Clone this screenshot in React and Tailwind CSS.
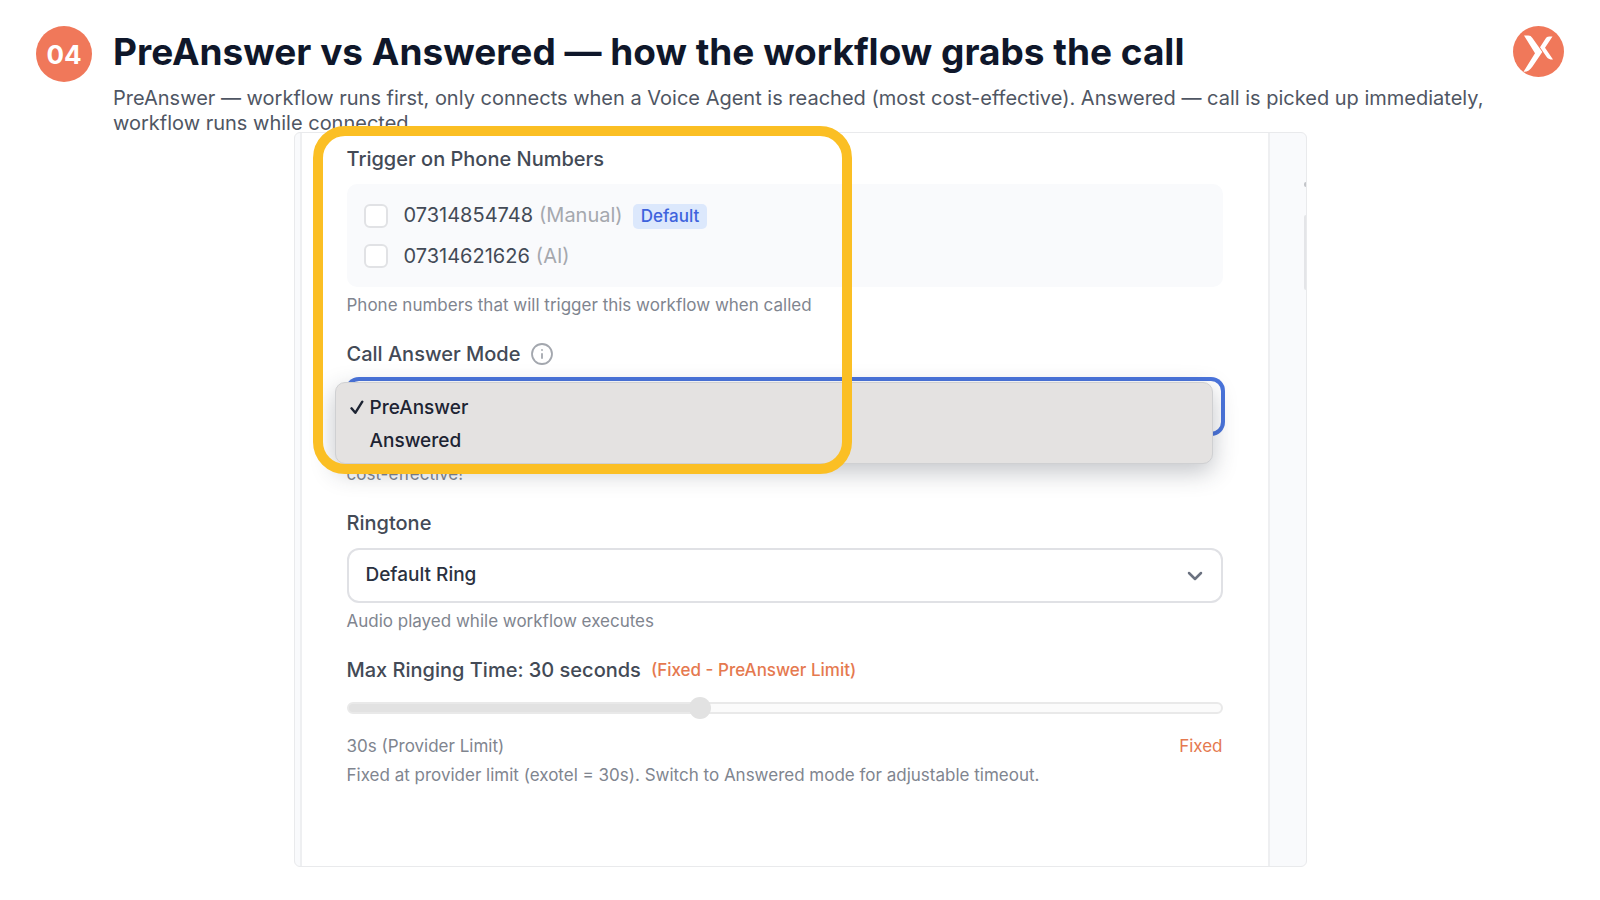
import { useState } from 'react';
import { ChevronDown, Info } from 'lucide-react';

const phoneNumbers = [
  { id: 'manual', number: '07314854748', kind: '(Manual)', isDefault: true },
  { id: 'ai', number: '07314621626', kind: '(AI)', isDefault: false },
];

const answerModes = ['PreAnswer', 'Answered'];

const labelClass = 'text-[20px] leading-[26px] font-medium text-[#434a56]';
const hintClass = 'mt-[7px] text-[17px] leading-[22px] text-[#80858f]';

function Logo() {
  return (
    <svg viewBox="0 0 51 51" className="size-[51px] shrink-0" role="img" aria-label="Logo">
      <circle cx="25.5" cy="25.5" r="25.5" fill="#f0785a" />
      <path
        d="M11 9.500h4.200c2 0 3 .8 4.200 2.600L29.300 26 19.500 40.500C17 44.300 14.500 45.800 10.500 45.800L22 27.200Z"
        fill="#fff"
      />
      <path
        d="M39.500 10.500h-3.300c-1.800 0-2.700.800-3.700 2.300L27 21.200l6.500 9.600c1.300 1.900 2.700 2.800 6.500 2.800L32 21.700Z"
        fill="#fff"
      />
    </svg>
  );
}

function CheckMark() {
  return (
    <svg viewBox="0 0 14 15" className="h-[15px] w-[14px]" fill="none" aria-hidden="true">
      <path
        d="M1.500 8.300 5.300 12.800 12.300 1.700"
        stroke="currentColor"
        strokeWidth="2.4"
        strokeLinecap="round"
        strokeLinejoin="round"
      />
    </svg>
  );
}

function Header() {
  return (
    <header className="flex items-start px-9 pt-[26px]">
      <div className="flex size-14 shrink-0 items-center justify-center rounded-full bg-[#f0785a] text-[26px] font-bold text-white">
        04
      </div>
      <div className="ml-[21px] mr-6 flex-1 pt-1">
        <h1 className="text-[37px] leading-[44px] font-bold text-[#0f172a]">
          PreAnswer vs Answered — how the workflow grabs the call
        </h1>
        <p className="mt-3 text-[20px] leading-[25px] text-[#4f5663]">
          PreAnswer — workflow runs first, only connects when a Voice Agent is reached (most cost-effective). Answered —
          call is picked up immediately, workflow runs while connected.
        </p>
      </div>
      <Logo />
    </header>
  );
}

function PhoneNumbers() {
  return (
    <fieldset>
      <legend className={labelClass}>Trigger on Phone Numbers</legend>
      <div className="mt-3 flex h-[103px] flex-col justify-center gap-4 rounded-[10px] bg-[#f9fafc] px-[17px]">
        {phoneNumbers.map((item) => (
          <label key={item.id} className="flex h-6 items-center text-[20px] leading-[26px] text-[#434a56]">
            <input
              type="checkbox"
              className="mr-4 size-6 shrink-0 appearance-none rounded-md border-2 border-[#e1e2e5] bg-white"
            />
            <span className="flex items-baseline">
              <span>{item.number}</span>
              <span className="ml-1.5 text-[#a5a8ae]">{item.kind}</span>
              {item.isDefault && (
                <span className="ml-2.5 rounded-[5px] bg-[#dce8fc] px-2 text-[17px] leading-[25px] font-medium text-[#3e63dd]">
                  Default
                </span>
              )}
            </span>
          </label>
        ))}
      </div>
      <p className={hintClass}>Phone numbers that will trigger this workflow when called</p>
    </fieldset>
  );
}

function AnswerMode() {
  const [mode, setMode] = useState('PreAnswer');

  return (
    <div>
      <div className="flex items-center gap-2.5">
        <label htmlFor="answer-mode" className={labelClass}>
          Call Answer Mode
        </label>
        <Info size={24} strokeWidth={1.8} className="text-[#a3a7ae]" />
      </div>
      <div className="relative mt-3">
        <select
          id="answer-mode"
          value={mode}
          onChange={(e) => setMode(e.target.value)}
          className="block h-[55px] w-full appearance-none rounded-xl border-2 border-[#4a74dc] bg-white px-4 text-[19px] text-transparent ring-2 ring-[#4a74dc]"
        >
          {answerModes.map((item) => (
            <option key={item}>{item}</option>
          ))}
        </select>
        {/* Open menu */}
        <div
          role="listbox"
          aria-label="Call Answer Mode"
          className="absolute -left-3 right-2.5 top-[3px] rounded-[10px] border border-[#cfd0d2] bg-[#e4e2e1] pt-2 pb-1.5 shadow-[0_8px_24px_rgba(40,45,60,0.28)]"
        >
          {answerModes.map((item) => (
            <button
              key={item}
              type="button"
              role="option"
              aria-selected={item === mode}
              onClick={() => setMode(item)}
              className="flex h-[33px] w-full items-center pl-3.5 text-left text-[19px] leading-6 font-medium text-[#1d2433]"
            >
              <span className="flex w-5">{item === mode && <CheckMark />}</span>
              {item}
            </button>
          ))}
        </div>
      </div>
      <p className={`pt-[22px] ${hintClass}`}>cost-effective!</p>
    </div>
  );
}

function Ringtone() {
  return (
    <div>
      <label htmlFor="ringtone" className={`block ${labelClass}`}>
        Ringtone
      </label>
      <div className="mt-3 grid items-center">
        <select
          id="ringtone"
          className="col-start-1 row-start-1 h-[55px] w-full appearance-none rounded-xl border-2 border-[#e0e1e5] bg-white px-[17px] text-[19px] font-medium text-[#2a3140]"
        >
          <option>Default Ring</option>
        </select>
        <ChevronDown
          size={24}
          strokeWidth={2.5}
          className="pointer-events-none col-start-1 row-start-1 mr-4 justify-self-end text-[#6b7280]"
        />
      </div>
      <p className={hintClass}>Audio played while workflow executes</p>
    </div>
  );
}

function RingingTime() {
  return (
    <div>
      <div className="flex items-center gap-2.5">
        <label htmlFor="ringing-time" className={labelClass}>
          Max Ringing Time: 30 seconds
        </label>
        <span className="text-[17px] leading-[22px] font-medium text-[#e5794f]">(Fixed - PreAnswer Limit)</span>
      </div>
      <input
        id="ringing-time"
        type="range"
        min="10"
        max="60"
        defaultValue="30"
        disabled
        className="mt-[14px] block h-[22px] w-full appearance-none bg-transparent [&::-webkit-slider-runnable-track]:h-3 [&::-webkit-slider-runnable-track]:rounded-full [&::-webkit-slider-runnable-track]:border-2 [&::-webkit-slider-runnable-track]:border-[#e9e9e9] [&::-webkit-slider-runnable-track]:bg-[linear-gradient(to_right,#e2e2e2_40%,#fbfbfb_40%)] [&::-webkit-slider-thumb]:-mt-[7px] [&::-webkit-slider-thumb]:size-[22px] [&::-webkit-slider-thumb]:appearance-none [&::-webkit-slider-thumb]:rounded-full [&::-webkit-slider-thumb]:bg-[#e2e2e2]"
      />
      <div className="mt-4 flex justify-between text-[17px] leading-[22px] text-[#80858f]">
        <span>30s (Provider Limit)</span>
        <span className="text-[#e5794f]">Fixed</span>
      </div>
      <p className={hintClass}>Fixed at provider limit (exotel = 30s). Switch to Answered mode for adjustable timeout.</p>
    </div>
  );
}

export default function App() {
  return (
    <div className="min-h-screen bg-white pb-[34px] font-['Inter','Liberation_Sans',sans-serif]">
      <Header />
      <main className="relative mx-auto -mt-1 max-w-[1013px]">
        <div className="flex overflow-hidden rounded-md border border-[#e9eaec] bg-[#f9fafc]">
          <form className="ml-[5px] flex-1 border-x-2 border-[#eeeff1] bg-white px-[45px] pb-[80px] pt-[13px]">
            <div className="flex flex-col gap-[25px]">
              <PhoneNumbers />
              <AnswerMode />
              <Ringtone />
              <RingingTime />
            </div>
          </form>
          {/* Edge of the next panel */}
          <div className="flex w-9 flex-col items-end pt-[49px]">
            <div className="h-[5px] w-0.5 rounded-l-full bg-[#c3c5c9]" />
            <div className="mt-7 h-[75px] w-0.5 rounded-l-full bg-[#e4e5e8]" />
          </div>
        </div>
        {/* Highlight frame */}
        <div className="pointer-events-none absolute -top-1.5 left-[19px] h-[348px] w-[539px] rounded-[32px] border-10 border-[#fbbf24]" />
      </main>
    </div>
  );
}
